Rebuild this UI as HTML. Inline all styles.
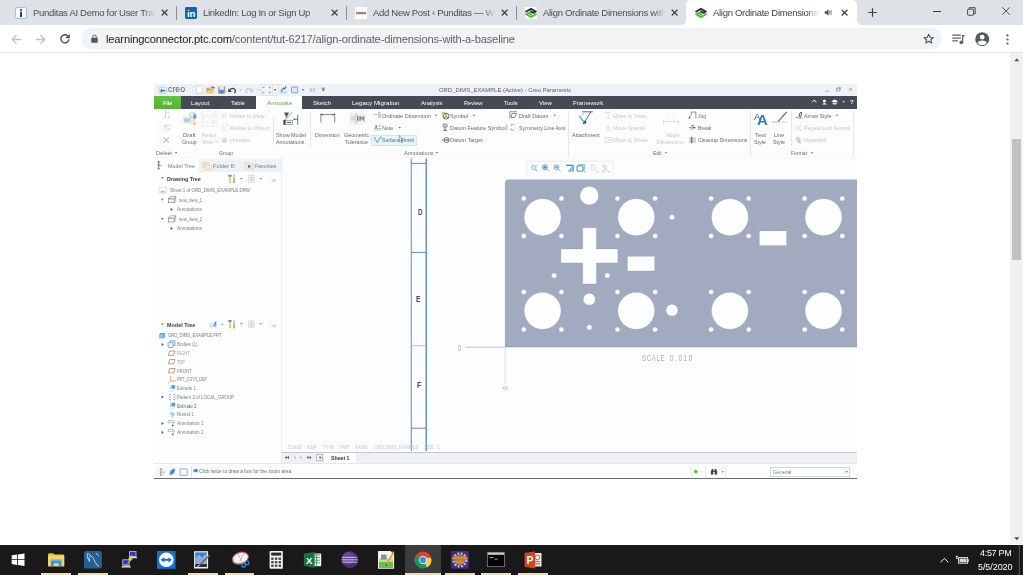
<!DOCTYPE html>
<html lang="en">
<head>
<meta charset="utf-8">
<title>Align Ordinate Dimensions with a Baseline</title>
<style>
*{box-sizing:border-box;margin:0;padding:0}
html,body{width:1023px;height:575px;overflow:hidden;background:#fff}
body{position:relative;font-family:"Liberation Sans",sans-serif;color:#000}
.abs{position:absolute}
.t{position:absolute;white-space:nowrap;line-height:1}
.ttl,#url,#clk1,#clk2{will-change:transform}
/* ---------- chrome frame ---------- */
#tabstrip{position:absolute;left:0;top:0;width:1023px;height:25.3px;background:#dee1e6}
#toolbar{position:absolute;left:0;top:25.3px;width:1023px;height:27.6px;background:#fff;border-bottom:1px solid #e1e3e7}
.tab{position:absolute;top:0;height:25.3px;width:170px}
.tab .fav{position:absolute;left:8.6px;top:7px;width:12px;height:12px}
.tab .ttl{position:absolute;left:26.2px;top:7.4px;font-size:9.5px;line-height:11px;color:#4a4d51;white-space:nowrap;overflow:hidden;width:122px;letter-spacing:-.3px;-webkit-mask-image:linear-gradient(90deg,#000 0,#000 calc(100% - 12px),transparent 100%);mask-image:linear-gradient(90deg,#000 0,#000 calc(100% - 12px),transparent 100%)}
.tab .x{position:absolute;left:154.9px;top:9.2px;width:7.2px;height:7.2px}
.sep{position:absolute;top:6px;width:1px;height:14px;background:#8b8e93}
#activetab{position:absolute;left:685.5px;top:0;width:171px;height:25.4px;background:#fff;border-radius:5px 5px 0 0}
#activetab:before,#activetab:after{content:"";position:absolute;bottom:0;width:5px;height:5px;background:radial-gradient(circle at 0 0,rgba(255,255,255,0) 4.6px,#fff 5.2px)}
#activetab:before{left:-5px}
#activetab:after{right:-5px;background:radial-gradient(circle at 100% 0,rgba(255,255,255,0) 4.6px,#fff 5.2px)}
#omni{position:absolute;left:80.9px;top:28.3px;width:861.3px;height:21.1px;border-radius:10.6px;background:#f1f3f4}
/* ---------- page scrollbar ---------- */
#sbar{position:absolute;left:1010.2px;top:53px;width:12.8px;height:490.7px;background:#f1f1f1}
#sthumb{position:absolute;left:1011.6px;top:139px;width:9.8px;height:121.3px;background:#c1c1c1}
#creo{position:absolute;left:0;top:0;width:1023px;height:575px;filter:blur(.3px)}
#ctext{position:absolute;left:0;top:0;width:1023px;height:575px;will-change:transform}
/* ---------- taskbar ---------- */
#taskbar{position:absolute;left:0;top:545px;width:1023px;height:30px;background:#191919}
.run{position:absolute;top:573px;height:2px;background:#f2dc9c}
</style>
</head>
<body>
<!-- CHROME TAB STRIP -->
<div id="tabstrip"></div>
<div id="activetab"></div>
<div class="tab" style="left:6.4px"><svg class="fav" viewBox="0 0 12 12"><rect x=".5" y=".5" width="11" height="11" rx="1.8" fill="#fdfdfe" stroke="#8fb2dc" stroke-width=".8"/><circle cx="6" cy="3.1" r="1.25" fill="#e23b2e"/><rect x="5" y="4.8" width="2" height="5.2" rx=".5" fill="#1f3f7a"/></svg><div class="ttl">Punditas AI Demo for User Trai</div><svg class="x" viewBox="0 0 10 10"><path d="M1 1 L9 9 M9 1 L1 9" stroke="#3c4043" stroke-width="1.7" fill="none"/></svg></div>
<div class="sep" style="left:176.1px"></div>
<div class="tab" style="left:176.5px"><svg class="fav" viewBox="0 0 12 12"><rect width="12" height="12" rx="1.4" fill="#0b67b2"/><text x="6.100" y="9.700" text-anchor="middle" font-family="Liberation Sans, sans-serif" font-weight="700" font-size="9.600" letter-spacing="-.2" fill="#fff">in</text></svg><div class="ttl">LinkedIn: Log In or Sign Up</div><svg class="x" viewBox="0 0 10 10"><path d="M1 1 L9 9 M9 1 L1 9" stroke="#3c4043" stroke-width="1.7" fill="none"/></svg></div>
<div class="sep" style="left:346.1px"></div>
<div class="tab" style="left:346.5px"><svg class="fav" viewBox="0 0 12 12"><rect width="12" height="12" fill="#fdfdfe"/><rect x="1" y="5" width="10.200" height="2.200" rx=".9" fill="#55525e" opacity=".8"/><rect x="5" y="5.200" width="1.600" height="1.600" fill="#d98b3a"/><rect x="2.200" y="5.600" width="1.400" height="1" fill="#d9d9e0"/><rect x="8" y="5.600" width="1.600" height="1" fill="#d9d9e0"/></svg><div class="ttl">Add New Post ‹ Punditas — Wo</div><svg class="x" viewBox="0 0 10 10"><path d="M1 1 L9 9 M9 1 L1 9" stroke="#3c4043" stroke-width="1.7" fill="none"/></svg></div>
<div class="sep" style="left:516.2px"></div>
<div class="tab" style="left:516.6px"><svg class="fav" viewBox="0 0 12 12"><rect width="12" height="12" fill="#fdfdfe"/><path d="M1.200 4.500 6 1.900 10.800 4.500 8.600 5.900 6 4.600" stroke="#2f3133" stroke-width="1.900" fill="none" stroke-linejoin="round" stroke-linecap="round"/><path d="M10.800 7.300 6 10.100 1.200 7.300 3.600 5.900 6.200 7.400" stroke="#55bd35" stroke-width="1.900" fill="none" stroke-linejoin="round" stroke-linecap="round"/></svg><div class="ttl">Align Ordinate Dimensions with</div><svg class="x" viewBox="0 0 10 10"><path d="M1 1 L9 9 M9 1 L1 9" stroke="#3c4043" stroke-width="1.7" fill="none"/></svg></div>
<div class="tab" style="left:686.6px"><svg class="fav" viewBox="0 0 12 12"><rect width="12" height="12" fill="#fdfdfe"/><path d="M1.200 4.500 6 1.900 10.800 4.500 8.600 5.900 6 4.600" stroke="#2f3133" stroke-width="1.900" fill="none" stroke-linejoin="round" stroke-linecap="round"/><path d="M10.800 7.300 6 10.100 1.200 7.300 3.600 5.900 6.200 7.400" stroke="#55bd35" stroke-width="1.900" fill="none" stroke-linejoin="round" stroke-linecap="round"/></svg><div class="ttl" style="width:106px;color:#3c4043">Align Ordinate Dimensions</div><svg class="abs" style="left:137px;top:8.2px;width:9px;height:9px" viewBox="0 0 12 12"><path d="M1 4.2h2.2L6 1.6v8.8L3.2 7.8H1z" fill="#4a4d51"/><path d="M7.6 3.6v4.8M9.4 2.6v6.8" stroke="#6a6d71" stroke-width="1.1" fill="none"/></svg><svg class="x" viewBox="0 0 10 10"><path d="M1 1 L9 9 M9 1 L1 9" stroke="#3c4043" stroke-width="1.7" fill="none"/></svg></div>
<svg class="abs" style="left:868px;top:8.4px;width:9px;height:9px" viewBox="0 0 10 10"><path d="M5 .3v9.4M.3 5h9.4" stroke="#3c4043" stroke-width="1.35" fill="none"/></svg>
<div class="abs" style="left:933px;top:10.6px;width:8px;height:1px;background:#3a3a3a"></div>
<svg class="abs" style="left:967px;top:6.6px;width:9px;height:9px" viewBox="0 0 9 9"><path d="M2.2 2V.7h6v6H7" stroke="#3a3a3a" stroke-width=".9" fill="none"/><rect x=".6" y="2.2" width="6" height="6" rx=".6" stroke="#3a3a3a" stroke-width=".9" fill="none"/></svg>
<svg class="abs" style="left:1001.6px;top:6.7px;width:8px;height:8px" viewBox="0 0 8 8"><path d="M.3 .3 7.7 7.7M7.7 .3 .3 7.7" stroke="#3a3a3a" stroke-width=".85" fill="none"/></svg>
<div id="toolbar"></div>
<div id="omni"></div>
<svg class="abs" style="left:11px;top:33.6px;width:11px;height:11px" viewBox="0 0 16 16"><path d="M15 8H2.2M8 1.8 1.8 8 8 14.2" stroke="#bdc1c6" stroke-width="1.9" fill="none"/></svg>
<svg class="abs" style="left:34.6px;top:33.6px;width:11px;height:11px" viewBox="0 0 16 16"><path d="M1 8h12.8M8 1.8 14.2 8 8 14.2" stroke="#bdc1c6" stroke-width="1.9" fill="none"/></svg>
<svg class="abs" style="left:58.6px;top:33px;width:12px;height:12px" viewBox="0 0 16 16"><path d="M13.2 8.6A5.4 5.4 0 1 1 11.7 4" stroke="#4d5156" stroke-width="1.9" fill="none"/><path d="M14.3 1v6h-6z" fill="#4d5156"/></svg>
<svg class="abs" style="left:90.9px;top:33.6px;width:7px;height:9.3px" viewBox="0 0 8 10"><rect x=".3" y="4" width="7.4" height="5.8" rx=".8" fill="#54575b"/><path d="M2 4.4V2.9a2 2 0 0 1 4 0v1.5" stroke="#54575b" stroke-width="1.1" fill="none"/></svg>
<div class="t" id="url" style="left:105.9px;top:33.4px;font-size:11.2px;line-height:13px;color:#5f6368;letter-spacing:-.19px"><span style="color:#202124">learningconnector.ptc.com</span>/content/tut-6217/align-ordinate-dimensions-with-a-baseline</div>
<svg class="abs" style="left:923px;top:33px;width:11.4px;height:11.4px" viewBox="0 0 24 24"><path d="M12 2.6l2.9 6.3 6.8.7-5.1 4.6 1.5 6.8L12 17.5 5.9 21l1.5-6.8L2.3 9.6l6.8-.7z" stroke="#4d5156" stroke-width="2.2" fill="none" stroke-linejoin="round"/></svg>
<svg class="abs" style="left:952px;top:34.1px;width:13px;height:11px" viewBox="0 0 13 11"><path d="M.3 1.2h8.6M.3 4h8.6M.3 6.8h5.6" stroke="#5f6368" stroke-width="1.25" fill="none"/><path d="M10.6 1v6.6" stroke="#5f6368" stroke-width="1.25"/><path d="M10 1h2.7v1.5H10z" fill="#5f6368"/><circle cx="9.3" cy="8.3" r="1.9" fill="#5f6368"/></svg>
<svg class="abs" style="left:975.2px;top:31.6px;width:14.4px;height:14.4px" viewBox="0 0 24 24"><circle cx="12" cy="12" r="11.6" fill="#55595e"/><circle cx="12" cy="8.6" r="3.9" fill="#fff"/><path d="M4.2 18.2c1.2-2.7 4.3-4 7.800-4s6.600 1.300 7.800 4a10 10 0 0 1-15.600 0z" fill="#fff"/></svg>
<svg class="abs" style="left:1005.6px;top:33.6px;width:3px;height:11px" viewBox="0 0 3 11"><circle cx="1.5" cy="1.4" r="1.1" fill="#55595e"/><circle cx="1.5" cy="5.5" r="1.1" fill="#55595e"/><circle cx="1.5" cy="9.6" r="1.1" fill="#55595e"/></svg>
<div id="sbar"></div><div id="sthumb"></div>
<svg class="abs" style="left:1013.8px;top:57.9px;width:5.6px;height:3.7px" viewBox="0 0 6 4"><path d="M3 .4 5.8 3.6H.2z" fill="#505050"/></svg>
<svg class="abs" style="left:1013.8px;top:536.6px;width:5.6px;height:3.7px" viewBox="0 0 6 4"><path d="M3 3.6 5.8 .4H.2z" fill="#505050"/></svg>
<div id="creo">
<div class="abs" style="left:153.5px;top:84.2px;width:703.1px;height:394.7px;background:#fcfdfe;"></div>
<div class="abs" style="left:153.5px;top:84.2px;width:703.1px;height:12.8px;background:#eef1f5;"></div>
<div class="abs" style="left:153.5px;top:108.6px;width:703.1px;height:49.0px;background:#fdfdfe;"></div>
<div class="abs" style="left:153.5px;top:96.2px;width:703.1px;height:12.8px;background:#444b55;"></div>
<div class="abs" style="left:153.5px;top:96.2px;width:27.6px;height:12.8px;background:linear-gradient(#61c342,#56b238);"></div>
<div class="abs" style="left:255.8px;top:96.2px;width:46.5px;height:13.2px;background:#fdfefe;"></div>
<div class="abs" style="left:272.8px;top:117.5px;width:0.7px;height:27.0px;background:#e4e7eb;"></div>
<div class="abs" style="left:310.1px;top:112.0px;width:0.7px;height:33.5px;background:#e4e7eb;"></div>
<div class="abs" style="left:568.1px;top:110.5px;width:0.7px;height:47.0px;background:#e4e7eb;"></div>
<div class="abs" style="left:749.9px;top:110.5px;width:0.7px;height:47.0px;background:#e4e7eb;"></div>
<div class="abs" style="left:791.0px;top:111.0px;width:0.7px;height:35.0px;background:#e4e7eb;"></div>
<div class="abs" style="left:853.4px;top:110.5px;width:0.7px;height:47.0px;background:#e4e7eb;"></div>
<div class="abs" style="left:153.5px;top:157.4px;width:703.1px;height:0.7px;background:#f6f8fa;"></div>
<div class="abs" style="left:371.2px;top:135.0px;width:45.8px;height:10.7px;background:#e2f7fe;border:.6px solid #c4ebf9"></div>
<div class="abs" style="left:153.5px;top:158.1px;width:127.5px;height:305.2px;background:#fdfefe;"></div>
<div class="abs" style="left:281.0px;top:158.1px;width:0.8px;height:305.2px;background:#eaedf5;"></div>
<div class="abs" style="left:199.1px;top:159.0px;width:82.1px;height:13.0px;background:#eef2f6;"></div>
<div class="abs" style="left:281.8px;top:158.1px;width:574.8px;height:293.9px;background:#fcfdfe;"></div>
<div class="abs" style="left:281.7px;top:452.0px;width:574.9px;height:11.3px;background:#eef0f3;"></div>
<div class="abs" style="left:281.7px;top:451.9px;width:574.9px;height:0.7px;background:#c3c7cc;"></div>
<div class="abs" style="left:324.4px;top:452.8px;width:31.8px;height:10.5px;background:#fdfefe;"></div>
<div class="abs" style="left:316.2px;top:454.2px;width:6.8px;height:7.0px;background:#f6f8fa;border:.6px solid #b9bec5"></div>
<div class="abs" style="left:153.5px;top:463.3px;width:703.1px;height:0.7px;background:#e6e8ef;"></div>
<div class="abs" style="left:153.5px;top:464.0px;width:703.1px;height:13.8px;background:#fcfdfe;"></div>
<div class="abs" style="left:153.5px;top:477.8px;width:703.1px;height:1.1px;background:#6a6e74;"></div>
<div class="abs" style="left:770.2px;top:466.7px;width:79.7px;height:10.3px;background:#fefefe;border:.6px solid #d3d7dc"></div><svg class="abs" style="left:282.4px;top:158.1px;width:574.2px;height:293.9px" viewBox="282.4 158.1 574.2 293.9">
<g stroke="#3c6eb4" stroke-width=".8" fill="none">
<path d="M411.7 158.6V451M411.7 163.5H426.3M411.7 252.5H426.3M411.7 428.3H426.3"/>
<path d="M426.6 158.6V451" stroke-width="1.150"/>
<path d="M411.7 345.8H426.3" stroke="#9ab6d9"/>
</g>
<path d="M509.3 179.5H860V347H505.3V183.5Q505.3 179.5 509.3 179.5Z" fill="#a1aabf"/>
<path d="M505.3 347H860" stroke="#7a8194" stroke-width=".5"/>
<g fill="#fdfeff" stroke="#8a92a6" stroke-width=".3">
<circle cx="543.0" cy="217.3" r="18.5"/>
<circle cx="524.2" cy="198.5" r="2.5"/>
<circle cx="524.2" cy="236.1" r="2.5"/>
<circle cx="561.8" cy="198.5" r="2.5"/>
<circle cx="561.8" cy="236.1" r="2.5"/>
<circle cx="636.7" cy="217.3" r="18.5"/>
<circle cx="617.9" cy="198.5" r="2.5"/>
<circle cx="617.9" cy="236.1" r="2.5"/>
<circle cx="655.5" cy="198.5" r="2.5"/>
<circle cx="655.5" cy="236.1" r="2.5"/>
<circle cx="730.3" cy="217.3" r="18.5"/>
<circle cx="711.5" cy="198.5" r="2.5"/>
<circle cx="711.5" cy="236.1" r="2.5"/>
<circle cx="749.1" cy="198.5" r="2.5"/>
<circle cx="749.1" cy="236.1" r="2.5"/>
<circle cx="823.9" cy="217.3" r="18.5"/>
<circle cx="805.1" cy="198.5" r="2.5"/>
<circle cx="805.1" cy="236.1" r="2.5"/>
<circle cx="842.7" cy="198.5" r="2.5"/>
<circle cx="842.7" cy="236.1" r="2.5"/>
<circle cx="543.0" cy="310.9" r="18.5"/>
<circle cx="524.2" cy="292.1" r="2.5"/>
<circle cx="524.2" cy="329.7" r="2.5"/>
<circle cx="561.8" cy="292.1" r="2.5"/>
<circle cx="561.8" cy="329.7" r="2.5"/>
<circle cx="636.7" cy="310.9" r="18.5"/>
<circle cx="617.9" cy="292.1" r="2.5"/>
<circle cx="617.9" cy="329.7" r="2.5"/>
<circle cx="655.5" cy="292.1" r="2.5"/>
<circle cx="655.5" cy="329.7" r="2.5"/>
<circle cx="730.3" cy="310.9" r="18.5"/>
<circle cx="711.5" cy="292.1" r="2.5"/>
<circle cx="711.5" cy="329.7" r="2.5"/>
<circle cx="749.1" cy="292.1" r="2.5"/>
<circle cx="749.1" cy="329.7" r="2.5"/>
<circle cx="823.9" cy="310.9" r="18.5"/>
<circle cx="805.1" cy="292.1" r="2.5"/>
<circle cx="805.1" cy="329.7" r="2.5"/>
<circle cx="842.7" cy="292.1" r="2.5"/>
<circle cx="842.7" cy="329.7" r="2.5"/>
<circle cx="589.7" cy="195.8" r="9.4"/>
<circle cx="672.4" cy="217.3" r="2.6"/>
<path d="M583.1 227.8H596.8V249H618.3V263H596.8V284.1H583.1V263H561.3V249H583.1Z"/>
<rect x="627.8" y="256.3" width="27.4" height="14.8"/>
<rect x="759.7" y="231" width="27.4" height="14.8"/>
<circle cx="554.5" cy="275.7" r="2.6"/>
<circle cx="607.7" cy="275.7" r="2.6"/>
<circle cx="589.7" cy="299.3" r="6"/>
<circle cx="672.4" cy="310.3" r="6"/>
<circle cx="589.7" cy="327.4" r="2.6"/>
</g>
<path d="M465.5 347.3H505" stroke="#b49cc8" stroke-width=".7" fill="none"/>
<path d="M505.6 347V383.8" stroke="#c9c3d6" stroke-width=".6" fill="none"/>
<ellipse cx="505.5" cy="388.3" rx="2.4" ry="1.3" stroke="#9a9ea6" stroke-width=".6" fill="none"/>
</svg><svg class="abs" style="left:153.5px;top:84.2px;width:703.1px;height:395.5px" viewBox="153.5 84.2 703.1 395.5">
<rect x="158.7" y="87.3" width="7.4" height="6.4" rx=".8" fill="#dbeaf8" stroke="#9cc3e8" stroke-width=".5"/>
<path d="M164.6 90.3H161.6V88.9L159.6 90.9L161.6 92.9V91.5H164.6Z" fill="#2f6fb5"/>
<path d="M192.3 86V94.5" stroke="#dde1e6" stroke-width="0.6" fill="none" />
<path d="M196 86.2H200.1L201.8 87.9V93.6H196Z" fill="#fefefe" stroke="#b9bec6" stroke-width=".5"/>
<path d="M205.9 88H209L209.8 88.9H212.6V93.5H205.9Z" fill="#e9a13b"/>
<path d="M205.9 93.5L207.3 90.2H213.8L212.6 93.5Z" fill="#f7c978"/>
<path d="M210 87.6Q211.6 86 213.2 87.2L213.6 86.4L214 88.6L211.8 88.4L212.6 87.8Q211.5 87.1 210.6 88Z" fill="#3b3f45"/>
<rect x="217.7" y="86.6" width="7" height="7.2" rx=".6" fill="#8e98a8"/>
<rect x="219" y="86.6" width="4.4" height="3.2" fill="#e9edf2"/>
<rect x="219.4" y="90.9" width="3.6" height="2.9" fill="#4f86c6"/>
<path d="M229.2 90.2Q231.6 87.6 234 89.3Q235.8 91 234 93.3" stroke="#33363b" stroke-width="1.15" fill="none"/>
<path d="M227.8 88.4V92.1H231.4Z" fill="#33363b"/>
<path d="M238.80 89.50H241.20L240.00 90.90Z" fill="#a9aeb5"/>
<path d="M250.8 90.2Q248.4 87.6 246.2 89.3Q244.6 91 246.4 93.3" stroke="#c6cad0" stroke-width="1.1" fill="none"/>
<path d="M252.3 88.4V92.1H248.7Z" fill="#c6cad0"/>
<path d="M256.40 89.50H258.80L257.60 90.90Z" fill="#c0c4ca"/>
<rect x="260.7" y="84.6" width="11" height="10.7" fill="#f4f6f9" stroke="#cdd1d7" stroke-width=".5"/>
<rect x="271.7" y="84.6" width="6.1" height="10.7" fill="#f4f6f9" stroke="#cdd1d7" stroke-width=".5"/>
<path d="M262.6 88.4V87.2H264M268.3 87.2H269.7V88.4M269.7 91.8V93H268.3M264 93H262.6V91.8" stroke="#5a5e64" stroke-width="0.6" fill="none" />
<path d="M273.40 89.45H276.00L274.70 90.95Z" fill="#3b3f45"/>
<path d="M280.4 91.5L283 88.2L284.2 89.2L285.8 86.6" stroke="#2f7fd0" stroke-width="1.1" fill="none"/>
<rect x="280" y="91.2" width="2.6" height="2.3" fill="#9fc4ea"/><rect x="283.2" y="91.6" width="2.6" height="2" fill="#c9ced6"/>
<rect x="291" y="87.4" width="6.2" height="5.6" rx=".6" fill="#d9e9f8" stroke="#5b9ad8" stroke-width=".8"/>
<rect x="292.6" y="86.6" width="5" height="1.2" fill="#b9c0ca"/>
<path d="M301.30 89.45H303.90L302.60 90.95Z" fill="#4a4e54"/>
<path d="M309.4 88.2L311.6 92.4M311.6 88.2L309.4 92.4M312.4 88.2L314.6 92.4M314.6 88.2L312.4 92.4" stroke="#a5aab2" stroke-width="0.6" fill="none" />
<path d="M317.4 85.5V95" stroke="#d9dde2" stroke-width="0.6" fill="none" />
<path d="M321.2 88.4H324.4" stroke="#3b3f45" stroke-width="0.7" fill="none" />
<path d="M321.30 89.75H324.30L322.80 91.45Z" fill="#3b3f45"/>
<path d="M825 91.4H828.4" stroke="#7d8188" stroke-width="0.6" fill="none" />
<rect x="836" y="88.6" width="3" height="2.6" fill="none" stroke="#7d8188" stroke-width=".55"/>
<path d="M837 88.6V87.6H840V90.2H839" stroke="#7d8188" stroke-width="0.55" fill="none" />
<path d="M848.6 88.1L851.6 91.3M851.6 88.1L848.6 91.3" stroke="#7d8188" stroke-width="0.6" fill="none" />
<path d="M811.8 102.4L813.8 100.2L815.8 102.4" stroke="#ffffff" stroke-width="1" fill="none" />
<circle cx="823.9" cy="101.2" r="1.5" fill="#fff"/><path d="M821.4 104.6Q823.9 101.6 826.4 104.6Z" fill="#fff"/>
<path d="M830.8 101.4L834.2 99.8L837.6 101.4L834.2 103Z" fill="#fff"/><path d="M832.2 102.8V104.2Q834.2 105.2 836.2 104.2V102.8L834.2 103.8Z" fill="#fff"/>
<path d="M841.90 101.40H844.50L843.20 103.00Z" fill="#ffffff"/>
<path d="M165 111.6V118.6M165 113H169.6M163 118.6L165 115.4" stroke="#c0c4ca" stroke-width="0.6" fill="none" />
<path d="M167.2 116.2L169.4 118.2M169.4 116.2L167.2 118.2" stroke="#b4b8be" stroke-width="0.6" fill="none" />
<path d="M163 125.6H170M165.4 124.4V131.6M163 129L165.4 126.4" stroke="#c0c4ca" stroke-width="0.6" fill="none" />
<path d="M167.4 128.6L169.4 130.8M169.4 128.6L167.4 130.8" stroke="#b4b8be" stroke-width="0.6" fill="none" />
<path d="M162.9 137.6L168.7 143.2M168.7 137.6L162.9 143.2" stroke="#8b8f96" stroke-width="0.75" fill="none" />
<path d="M174.20 152.15H176.80L175.50 153.65Z" fill="#6b6f75"/>
<circle cx="192.3" cy="116.2" r="3.9" fill="#cfe0f4"/><circle cx="193.2" cy="116.6" r="2.6" fill="#6d9fd8"/><circle cx="191.5" cy="115" r="1.6" fill="#f4f9fe"/>
<rect x="183" y="117.2" width="8.2" height="5.6" rx=".5" fill="#a7d4f2"/><rect x="183" y="117.2" width="8.2" height="1.6" fill="#d6ecfa"/>
<path d="M191.6 115.4L195.8 123.8Q192.2 126 188.2 123.8Z" fill="#f6dcae"/><path d="M191.6 115.4L193.6 124.8Q192 125.3 190.4 124.9Z" fill="#fbeed3"/>
<circle cx="193.9" cy="124" r=".6" fill="#e0524a"/>
<rect x="201.2" y="111.2" width="15.4" height="15.4" fill="none" stroke="#d3d6db" stroke-width=".7" stroke-dasharray="1.2 1"/>
<rect x="203" y="115.4" width="6.6" height="7" fill="none" stroke="#e1e4e8" stroke-width=".7"/>
<circle cx="213.1" cy="115.4" r="1.5" fill="none" stroke="#cfd2d7" stroke-width=".6"/><circle cx="213.1" cy="122" r="1.5" fill="none" stroke="#cfd2d7" stroke-width=".6"/>
<path d="M214.30 141.25H216.90L215.60 142.75Z" fill="#c9cdd2"/>
<path d="M221.2 114H225.4M221.2 115.8H224.4M221.6 117.6H223.6M225.6 113V116.4M224 116.8L226.6 118.6" stroke="#d0d3d8" stroke-width="0.6" fill="none" />
<path d="M221.6 125.4V130.4H225.6M223.2 126.4L225.8 129M225.4 124.8H227V126.4" stroke="#d0d3d8" stroke-width="0.6" fill="none" />
<circle cx="224" cy="140.4" r="2.1" fill="none" stroke="#a9adb4" stroke-width=".6"/>
<path d="M224 138.4V142.4M222.4 141.6L224 140L225.6 141.6" stroke="#b4b8be" stroke-width="0.5" fill="none" />
<path d="M283.6 112.6H288.6L286.4 116.8V119.4L285.4 118.8V116.8Z" fill="#4a4e55"/>
<path d="M291.8 112.2L283.8 120.6" stroke="#8fd6f3" stroke-width="1.3" fill="none" />
<path d="M297.2 115V125M297.2 119.4H293.4" stroke="#3d4147" stroke-width="0.7" fill="none" />
<path d="M293.2 118.4V120.4L294.8 119.4Z" fill="#3d4147"/>
<rect x="283.2" y="120.4" width="8.6" height="4.4" fill="#fff" stroke="#5a5e64" stroke-width=".55"/>
<rect x="283.2" y="120.4" width="1.9" height="4.4" fill="#3d4147"/>
<path d="M286.4 122.6H290.6" stroke="#4a4e55" stroke-width="1" fill="none" />
<path d="M320.4 113.4V122.6M334.2 113.4V122.6M320.4 114.8H334.2" stroke="#60646b" stroke-width="0.8" fill="none" />
<path d="M320.4 114.8L322.4 113.9V115.7ZM334.2 114.8L332.2 113.9V115.7Z" fill="#4a4e55"/>
<path d="M349.6 113.6H364M349.6 124H364" stroke="#d5d8dc" stroke-width="0.6" fill="none" />
<rect x="349.6" y="115.4" width="14.4" height="6.6" fill="none" stroke="#c9ccd1" stroke-width=".5"/>
<path d="M355.4 113.6V124" stroke="#9a9ea5" stroke-width="0.6" fill="none" />
<path d="M350.4 117.4H353.4M350.4 120H353.4M353.4 116.8Q354.8 118.7 353.4 120.6" stroke="#8b8f96" stroke-width="0.6" fill="none" />
<path d="M357 116.4V121M358.6 116.4V121" stroke="#5a5e64" stroke-width="0.9" fill="none" />
<path d="M360.2 121V116.6L361.7 119.6L363.2 116.6V121" stroke="#5a5e64" stroke-width="0.8" fill="none" />
<path d="M373.2 114.8H377.4M378.4 112V117.4M379.6 112.4V117.4M377.6 117.4H380.6" stroke="#8b8f96" stroke-width="0.6" fill="none" />
<path d="M434.30 115.05H436.90L435.60 116.55Z" fill="#6b6f75"/>
<path d="M374.6 127.6L375.6 125L376.6 127.6Z" fill="#4a4e55"/>
<path d="M377.6 126H380.6M373.4 128.6H380.6" stroke="#7b7f86" stroke-width="0.6" fill="none" />
<path d="M373.4 130.2H380.6" stroke="#b4b8be" stroke-width="0.9" fill="none" />
<path d="M397.90 127.25H400.50L399.20 128.75Z" fill="#6b6f75"/>
<path d="M375.2 140L376.8 142.8L379.8 137.4H381.4" stroke="#3f6b96" stroke-width="0.7" fill="none" />
<path d="M373.2 138H375.6M373.4 139.4H375.2" stroke="#5a6f8a" stroke-width="0.6" fill="none" />
<path d="M441.4 112.2H444.6V113H442.2V115.4H441.4Z" fill="#e9a13b"/>
<circle cx="445.6" cy="116.3" r="2.9" fill="none" stroke="#3d4147" stroke-width=".8"/>
<path d="M445.6 113.6V116.4L443.4 118.2M445.6 116.4L447.8 118.2" stroke="#3d4147" stroke-width="0.7" fill="none" />
<path d="M472.10 115.05H474.70L473.40 116.55Z" fill="#6b6f75"/>
<rect x="442.6" y="124.2" width="4" height="3" fill="#c9ccd1" stroke="#5a5e64" stroke-width=".5"/>
<path d="M444.6 127.2V130.2M442.8 130.6H446.4" stroke="#3d4147" stroke-width="0.8" fill="none" />
<circle cx="446" cy="140.3" r="2.5" fill="none" stroke="#3d4147" stroke-width=".7"/>
<path d="M441 140.3H448.4" stroke="#3d4147" stroke-width="0.6" fill="none" />
<circle cx="446.3" cy="140.3" r=".9" fill="#6b6f75"/>
<path d="M435.10 152.15H437.70L436.40 153.65Z" fill="#6b6f75"/>
<path d="M509.4 118.8V111.9H516.3" stroke="#4a4e55" stroke-width="0.6" fill="none" />
<path d="M511.6 113.6H515.8L514.4 117.6H510.4Z" fill="none" stroke="#a0622a" stroke-width=".8"/>
<path d="M552.90 115.05H555.50L554.20 116.55Z" fill="#6b6f75"/>
<path d="M510.6 124.6H513.4M510.6 124.6V126.6M510.6 128.4V130.4M510.6 130.4H513.4" stroke="#7b7f86" stroke-width="0.6" fill="none" />
<path d="M514.4 124V131" stroke="#b4b8be" stroke-width="0.5" fill="none" stroke-dasharray="1.4 .8"/>
<path d="M506.5 124.4V130.6" stroke="#8b8f96" stroke-width="0.6" fill="none" />
<path d="M581.6 112H592.4M590.4 112L583.6 123" stroke="#3d4147" stroke-width="0.8" fill="none" />
<path d="M582.4 124.6L583.2 120.6L586.4 122.4Z" fill="#24282e"/>
<path d="M579 116L584.8 124.6" stroke="#35a9ee" stroke-width="1.2" fill="none" />
<path d="M581.4 113.6L583.6 115.4M583.6 113.6L581.4 115.4" stroke="#8b8f96" stroke-width="0.5" fill="none" />
<path d="M605 112.6H610.4M607.7 112.6V118.6M606 118.6H609.4M604.6 113.4L605.6 112" stroke="#d0d3d8" stroke-width="0.7" fill="none" />
<path d="M604.6 130.4H611M607.6 125V130.4M605.6 128.4Q607.6 126.4 609.6 128.4" stroke="#d0d3d8" stroke-width="0.6" fill="none" />
<rect x="604.6" y="137.8" width="6.4" height="5" fill="none" stroke="#d0d3d8" stroke-width=".6"/>
<path d="M606 140.3H609.4M608.4 139.2L609.6 140.3L608.4 141.4" stroke="#c3c7cc" stroke-width="0.6" fill="none" />
<path d="M667.6 112.6V124.6M673.4 112.6V124.6M667.6 113.6H673.4" stroke="#dfe2e6" stroke-width="0.6" fill="none" stroke-dasharray="1.2 .8"/>
<path d="M663 120.6V124.6M678 120.6V124.6M663 121.6H678" stroke="#d0d3d8" stroke-width="0.7" fill="none" />
<path d="M688.6 118.6L690.8 114.6L690.8 112.2H695.4V118.6" stroke="#5a5e64" stroke-width="0.65" fill="none" />
<path d="M688.2 119L688.6 116.8L690 118Z" fill="#3d4147"/>
<path d="M688.4 127.9H691M693 127.9H695.6M691.4 125.4V130.4" stroke="#5a5e64" stroke-width="0.65" fill="none" />
<path d="M691.8 127.9L693.8 126.8V129Z" fill="#3d4147"/><path d="M691.2 125H693.4V126H691.2Z" fill="#6b6f75"/>
<path d="M688.4 138.4H695.4M688.4 140.3H695.4M688.4 142.2H695.4" stroke="#7b7f86" stroke-width="0.6" fill="none" />
<path d="M691.2 137V143.6" stroke="#3d4147" stroke-width="0.9" fill="none" />
<path d="M664.10 152.45H666.70L665.40 153.95Z" fill="#6b6f75"/>
<path d="M771 122.2H778.4" stroke="#6fd0f3" stroke-width="0.9" fill="none" />
<path d="M778.4 122.2H786.4" stroke="#b4b8be" stroke-width="0.6" fill="none" />
<path d="M786.2 112.2L778.6 120.6" stroke="#6b6f75" stroke-width="1.2" fill="none" />
<path d="M785.4 111.8L780.2 117.6" stroke="#d9b9a0" stroke-width="0.5" fill="none" />
<path d="M777.4 122L778 120L779.4 121.2Z" fill="#3d4147"/>
<path d="M794.8 117.8H797.4M797.6 118.4H801.8" stroke="#5a5e64" stroke-width="0.6" fill="none" />
<path d="M798.4 117.6L799.2 113.8L800.6 112.2L801.2 113.4L800 117.6" stroke="#3d4147" stroke-width="0.9" fill="none" />
<path d="M835.10 115.05H837.70L836.40 116.55Z" fill="#6b6f75"/>
<path d="M795 125L801 131M795.4 130.8L800.8 125M798.6 130.4H801.6" stroke="#d0d3d8" stroke-width="0.8" fill="none" />
<circle cx="797.6" cy="139.4" r="2.5" fill="#d6d9dd"/><path d="M797.4 139.8L801.4 141.4L799.6 142L800.6 143.6L799.8 144L798.8 142.4L797.6 143.6Z" fill="#c3c7cc"/>
<path d="M810.10 152.45H812.70L811.40 153.95Z" fill="#6b6f75"/>
</svg><svg class="abs" style="left:153.5px;top:84.2px;width:703.1px;height:395.5px" viewBox="153.5 84.2 703.1 395.5">
<rect x="157.5" y="161.6" width="1.5" height="1.5" fill="none" stroke="#5a5e64" stroke-width=".45"/>
<rect x="157.5" y="164.9" width="1.5" height="1.5" fill="none" stroke="#5a5e64" stroke-width=".45"/>
<rect x="157.5" y="168.2" width="1.5" height="1.5" fill="none" stroke="#5a5e64" stroke-width=".45"/>
<path d="M158.2 163.1V164.9M158.2 166.4V168.2M159.4 165.7H161" stroke="#5a5e64" stroke-width="0.5" fill="none" />
<path d="M202.2 162.4H205L205.8 163.2H208.6V167.6H202.2Z" fill="#f6e3bd" stroke="#e2b772" stroke-width=".35"/>
<path d="M204.8 164.8H207.6L208.4 165.6H211.2V169.8H204.8Z" fill="#faecd0" stroke="#e2b772" stroke-width=".35"/>
<path d="M244.8 163H248L248.8 163.9H253.2V169.4H244.8Z" fill="#f9ecd2" stroke="#e2b772" stroke-width=".4"/>
<path d="M247.6 165L250.8 166.6L247.6 168.2Z" fill="#2f6fb5"/>
<path d="M160.20 177.50H163.40L161.80 179.50Z" fill="#7d8188"/>
<rect x="227.6" y="175.0" width="3.6" height="1.9" rx=".4" fill="#8b8f96"/>
<rect x="228.7" y="176.7" width="1.5" height="6.6" fill="#e0b87a"/>
<rect x="233" y="174.7" width="1" height="4" fill="#9a9ea5"/>
<rect x="232.6" y="178.5" width="1.8" height="4.8" rx=".4" fill="#e3a24a"/>
<path d="M239.70 178.20H242.10L240.90 179.60Z" fill="#6b6f75"/>
<rect x="248.2" y="175.9" width="5.6" height="6.6" fill="#f1f3f6" stroke="#c3c7cc" stroke-width=".45"/>
<path d="M249.4 177.7H252.6M249.4 179.2H252.6M249.4 180.7H252.6" stroke="#a5aab2" stroke-width="0.5" fill="none" />
<path d="M250.4 175.7L252 174.5L253.2 175.5" stroke="#b4b8be" stroke-width="0.5" fill="none" />
<path d="M259.00 178.20H261.40L260.20 179.60Z" fill="#6b6f75"/>
<path d="M269.6 174.9V181.9M269.6 177.5H271.4M269.6 180.9H271.4" stroke="#d9dce1" stroke-width="0.6" fill="none" stroke-dasharray=".9 .7"/>
<rect x="272" y="179.5" width="3.4" height="2.6" fill="#d3d6db"/>
<path d="M160.20 323.60H163.40L161.80 325.60Z" fill="#7d8188"/>
<rect x="227.6" y="320.3" width="3.6" height="1.9" rx=".4" fill="#8b8f96"/>
<rect x="228.7" y="322.0" width="1.5" height="6.6" fill="#e0b87a"/>
<rect x="233" y="320.0" width="1" height="4" fill="#9a9ea5"/>
<rect x="232.6" y="323.8" width="1.8" height="4.8" rx=".4" fill="#e3a24a"/>
<path d="M239.70 323.50H242.10L240.90 324.90Z" fill="#6b6f75"/>
<rect x="248.2" y="321.2" width="5.6" height="6.6" fill="#f1f3f6" stroke="#c3c7cc" stroke-width=".45"/>
<path d="M249.4 323.0H252.6M249.4 324.5H252.6M249.4 326.0H252.6" stroke="#a5aab2" stroke-width="0.5" fill="none" />
<path d="M250.4 321.0L252 319.8L253.2 320.8" stroke="#b4b8be" stroke-width="0.5" fill="none" />
<path d="M259.00 323.50H261.40L260.20 324.90Z" fill="#6b6f75"/>
<path d="M269.6 320.2V327.2M269.6 322.8H271.4M269.6 326.2H271.4" stroke="#d9dce1" stroke-width="0.6" fill="none" stroke-dasharray=".9 .7"/>
<rect x="272" y="324.8" width="3.4" height="2.6" fill="#d3d6db"/>
<path d="M208.8 323H215.2L216.6 321.6V326L215.2 327.6H208.8Z" fill="#cfe4f7"/>
<path d="M214.2 322.4L216 321.2L214.8 326.4L213.4 327.2Z" fill="#3f8ad6"/>
<path d="M220.60 323.90H223.00L221.80 325.30Z" fill="#6b6f75"/>
<rect x="158.5" y="187.6" width="7.2" height="5.8" fill="#fafcfe" stroke="#c3c9d2" stroke-width=".45"/>
<path d="M159.4 192.6L161.4 190.4L162.8 191.6L164 190.6L165 192.6Z" fill="#8fc0ea"/>
<path d="M160.20 198.90H163.40L161.80 200.90Z" fill="#7d8188"/>
<path d="M168 199.2L169.6 196.8H175.2L173.6 199.2Z" fill="#fdfdfe" stroke="#5a5e64" stroke-width=".5"/>
<rect x="168" y="199.2" width="5.6" height="3.8" fill="#fdfdfe" stroke="#5a5e64" stroke-width=".5"/>
<path d="M173.6 203.0L175.2 200.6V196.8" stroke="#5a5e64" stroke-width="0.5" fill="none" />
<path d="M170.10 208.00L172.50 209.60L170.10 211.20Z" fill="#5a5e64"/>
<path d="M160.20 218.10H163.40L161.80 220.10Z" fill="#7d8188"/>
<path d="M168 218.4L169.6 216.0H175.2L173.6 218.4Z" fill="#fdfdfe" stroke="#5a5e64" stroke-width=".5"/>
<rect x="168" y="218.4" width="5.6" height="3.8" fill="#fdfdfe" stroke="#5a5e64" stroke-width=".5"/>
<path d="M173.6 222.2L175.2 219.8V216.0" stroke="#5a5e64" stroke-width="0.5" fill="none" />
<path d="M170.10 227.00L172.50 228.60L170.10 230.20Z" fill="#5a5e64"/>
<path d="M158.8 334.4L160 333.2H164.4V337.2L163.2 338.4H158.8Z" fill="#4f9be0"/><path d="M158.8 334.4H163.2V338.4H158.8Z" fill="#8cc3f0"/>
<path d="M161.00 343.20L163.40 344.80L161.00 346.40Z" fill="#5a5e64"/>
<rect x="167.6" y="342.6" width="5" height="5" rx=".8" fill="#f2f8fd" stroke="#3f8ad6" stroke-width=".7"/>
<path d="M169.6 342.4V341H174.4V345.6H172.8" fill="none" stroke="#3f8ad6" stroke-width=".7"/>
<path d="M169.2 351.2H174.6L173.2 355.6H167.8Z" fill="none" stroke="#a86b3a" stroke-width=".65"/>
<path d="M169.2 359.7H174.6L173.2 364.1H167.8Z" fill="none" stroke="#a86b3a" stroke-width=".65"/>
<path d="M169.2 368.7H174.6L173.2 373.1H167.8Z" fill="none" stroke="#a86b3a" stroke-width=".65"/>
<path d="M170.2 376.2V381.2H175.2M170.2 381.2L167.6 383.4" stroke="#c08a4a" stroke-width="0.7" fill="none" />
<path d="M171 385.3H174.6V388.9H171Z" fill="#4f9be0"/>
<path d="M171 385.3L169.4 386.7V390.3L171 388.9Z" fill="#a9d4f5"/>
<path d="M168 391.7H172.4L173.4 389.9" stroke="#c3c9d2" stroke-width="0.5" fill="none" />
<path d="M161.00 395.60L163.40 397.20L161.00 398.80Z" fill="#5a5e64"/>
<rect x="168.85" y="394.05" width="1.1" height="1.1" fill="#8a5fc0"/>
<rect x="168.85" y="396.65" width="1.1" height="1.1" fill="#8a5fc0"/>
<rect x="168.85" y="399.25" width="1.1" height="1.1" fill="#8a5fc0"/>
<rect x="173.05" y="394.05" width="1.1" height="1.1" fill="#8a5fc0"/>
<rect x="173.05" y="396.65" width="1.1" height="1.1" fill="#8a5fc0"/>
<rect x="173.05" y="399.25" width="1.1" height="1.1" fill="#8a5fc0"/>
<path d="M175.3 394.2V400.2" stroke="#c9ccd1" stroke-width="0.5" fill="none" />
<path d="M171 403.0H174.6V406.6H171Z" fill="#4f9be0"/>
<path d="M171 403.0L169.4 404.4V408.0L171 406.6Z" fill="#a9d4f5"/>
<path d="M168 409.4H172.4L173.4 407.6" stroke="#c3c9d2" stroke-width="0.5" fill="none" />
<path d="M169 412.6Q173.6 411.6 174.4 414.4Q172.6 415.4 172.4 418L171.4 417.6Q171.2 414.2 169 412.6Z" fill="#8fc8f2"/>
<path d="M161.00 422.10L163.40 423.70L161.00 425.30Z" fill="#5a5e64"/>
<path d="M167.6 420.8H172.6V423.0H167.6ZM174.6 421.4L172 426.4" stroke="#8b8f96" stroke-width="0.55" fill="none" />
<path d="M171.4 427.0L171.8 424.8L173.2 425.8Z" fill="#3d4147"/>
<path d="M161.00 430.90L163.40 432.50L161.00 434.10Z" fill="#5a5e64"/>
<path d="M167.6 429.6H172.6V431.8H167.6ZM174.6 430.2L172 435.2" stroke="#8b8f96" stroke-width="0.55" fill="none" />
<path d="M171.4 435.8L171.8 433.6L173.2 434.6Z" fill="#3d4147"/>
<path d="M526.4 175.4V161.4H612.4V175.4" fill="#fdfefe" stroke="#dde1e6" stroke-width=".6"/>
<rect x="530.6" y="165" width="5.6" height="5.6" fill="#eef3f9" stroke="#c3c9d2" stroke-width=".5" stroke-dasharray="1 .6"/>
<circle cx="533.2" cy="167.6" r="1.9" fill="#e3eefa" stroke="#7fa6cf" stroke-width=".6"/>
<path d="M534.6 169.2L537 171.6" stroke="#8b8f96" stroke-width="0.8" fill="none" />
<circle cx="544.4" cy="167.4" r="2.5" fill="#d9e9f8" stroke="#3f7fc9" stroke-width=".7"/>
<path d="M543 167.4H545.8M544.4 166V168.8" stroke="#1f5fa8" stroke-width="0.8" fill="none" />
<path d="M546.3 169.4L548.6 171.6" stroke="#9a9ea5" stroke-width="0.9" fill="none" />
<circle cx="556" cy="167.4" r="2.5" fill="#d9e9f8" stroke="#5b93d3" stroke-width=".7"/>
<path d="M554.6 167.4H557.4" stroke="#1f5fa8" stroke-width="0.8" fill="none" />
<path d="M557.9 169.4L560.2 171.6" stroke="#9a9ea5" stroke-width="0.9" fill="none" />
<path d="M565.6 165H573.2V171.6H567.2L572 166.2H565.6Z" fill="#3f8ad6"/>
<path d="M567.6 171.4L572.6 165.8V171.4Z" fill="#8cc0ee"/>
<rect x="576.6" y="166" width="6" height="5.4" rx=".6" fill="#fdfefe" stroke="#2f6fb5" stroke-width=".9"/>
<path d="M576.8 166L578.2 164.6H584.2V169.8L582.8 171.2" fill="none" stroke="#6fa8e0" stroke-width=".8"/>
<path d="M583.60 171.70H585.20L584.40 172.70Z" fill="#5a5e64"/>
<circle cx="592.4" cy="167.4" r="2.8" fill="#f1f3f6" stroke="#d3d6db" stroke-width=".6"/>
<path d="M594.4 169.6L596.6 171.8" stroke="#d3d6db" stroke-width="0.9" fill="none" />
<path d="M596.20 171.70H597.80L597.00 172.70Z" fill="#9a9ea5"/>
<path d="M602 165.2L604 167M604 165.2L602 167M605.4 165.6V168M603 170.6L605 168.6L607 170.6M602 171.6H604" stroke="#e0a04a" stroke-width="0.7" fill="none" />
<path d="M607.80 171.70H609.40L608.60 172.70Z" fill="#5a5e64"/>
<path d="M286.30 456.10L284.30 457.60L286.30 459.10Z" fill="#4a4e55"/>
<path d="M288.50 456.10L286.50 457.60L288.50 459.10Z" fill="#4a4e55"/>
<path d="M295.20 456.10L293.20 457.60L295.20 459.10Z" fill="#b4b8be"/>
<path d="M299.40 456.10L301.40 457.60L299.40 459.10Z" fill="#b4b8be"/>
<path d="M306.90 456.10L308.90 457.60L306.90 459.10Z" fill="#4a4e55"/>
<path d="M309.10 456.10L311.10 457.60L309.10 459.10Z" fill="#4a4e55"/>
<path d="M318.2 457.7H321.2M319.7 456.2V459.2" stroke="#4a4e55" stroke-width="0.6" fill="none" />
<rect x="155.900" y="467.800" width="9.800" height="9.200" fill="#f3f4f7"/>
<path d="M160.4 468.8V476M160.4 470H162M160.4 474.6H162" stroke="#7b7f86" stroke-width="0.5" fill="none" />
<rect x="159.6" y="468.6" width="1.6" height="1.6" fill="#9a9ea5"/><rect x="159.6" y="471.6" width="1.6" height="1.6" fill="#9a9ea5"/><rect x="159.6" y="474.4" width="1.6" height="1.6" fill="#9a9ea5"/>
<path d="M162.4 472.4H164.4" stroke="#5a5e64" stroke-width="0.6" fill="none" />
<path d="M168.6 474.6L170.4 470.4L175 469.2L173.4 473.6Z" fill="#3f8ad6"/><path d="M168.6 474.6L170.2 476L173.4 473.6Z" fill="#8cc0ee"/><path d="M171.6 470L172.6 468.4L174.2 469.4Z" fill="#6a6e74"/>
<rect x="179.500" y="469" width="7.200" height="6.600" rx=".5" fill="#f4f8fd" stroke="#4f8fd6" stroke-width=".65"/>
<path d="M191 466.6V477" stroke="#c9ccd1" stroke-width="0.6" fill="none" />
<path d="M193 469.6H195.2V468.4L197.8 470.8L195.2 473.2V472H193Z" fill="#2f7fd0"/>
<path d="M690.8 466.4V477.2M705.2 466.4V477.2M725.3 466.4V477.2" stroke="#d3d6db" stroke-width="0.6" fill="none" />
<circle cx="695.3" cy="471.8" r="1.9" fill="#5cc23a"/>
<path d="M698.8 472H700M700.9 472H702.1" stroke="#c3c7cc" stroke-width="0.7" fill="none" />
<path d="M710.4 474.6V471.4L711.4 469.2H712.8V474.6ZM716.6 474.6V471.4L715.6 469.2H714.2V474.6Z" fill="#3d4147"/><rect x="712.6" y="470.8" width="1.8" height="1.4" fill="#3d4147"/>
<path d="M721.10 471.55H723.30L722.20 472.85Z" fill="#5a5e64"/>
<path d="M842.7 467.4V476.6" stroke="#dde1e6" stroke-width="0.5" fill="none" />
<path d="M845.00 471.50H847.40L846.20 472.90Z" fill="#4a4e55"/>
<path d="M398.8 135.7V142L400.2 140.7L401.2 143L402.1 142.600L401.100 140.400H403Z" fill="#fff" stroke="#3d4147" stroke-width=".45" stroke-linejoin="round"/>
</svg>
<div id="ctext">
<div class="t" style="left:439.0px;top:86px;font-size:5.9px;line-height:8px;color:#5a5e64;transform:scaleX(1.0021);transform-origin:0 50%;">ORD_DIMS_EXAMPLE (Active) - Creo Parametric</div>
<div class="t" style="left:168.4px;top:83px;font-size:8.6px;line-height:12px;color:#55595f;transform:scaleX(1.0228);transform-origin:0 50%;">creo</div>
<div class="t" style="left:753.9px;top:110px;font-size:9.6px;line-height:13px;color:#4a4e55;">A</div>
<div class="t" style="left:756.9px;top:111px;font-size:15px;line-height:18px;color:#2a7fc9;font-weight:700;font-family:"Liberation Serif",serif;">A</div>
<div class="t" style="left:850.1px;top:98px;font-size:6px;line-height:8px;color:#ffffff;font-weight:700;">?</div>
<div class="t" style="left:162.8px;top:99px;font-size:6px;line-height:8px;color:#ffffff;font-weight:700;transform:scaleX(0.9088);transform-origin:0 50%;">File</div>
<div class="t" style="left:191.4px;top:98px;font-size:6.2px;line-height:9px;color:#ffffff;transform:scaleX(0.9904);transform-origin:0 50%;">Layout</div>
<div class="t" style="left:230.9px;top:98px;font-size:6.2px;line-height:9px;color:#ffffff;transform:scaleX(0.9529);transform-origin:0 50%;">Table</div>
<div class="t" style="left:267.0px;top:99px;font-size:6px;line-height:8px;color:#7a9a5a;transform:scaleX(1.0486);transform-origin:0 50%;">Annotate</div>
<div class="t" style="left:313.2px;top:98px;font-size:6.2px;line-height:9px;color:#ffffff;transform:scaleX(0.9566);transform-origin:0 50%;">Sketch</div>
<div class="t" style="left:352.4px;top:98px;font-size:6.2px;line-height:9px;color:#ffffff;transform:scaleX(1.0101);transform-origin:0 50%;">Legacy Migration</div>
<div class="t" style="left:421.4px;top:98px;font-size:6.2px;line-height:9px;color:#ffffff;transform:scaleX(0.9329);transform-origin:0 50%;">Analysis</div>
<div class="t" style="left:464.0px;top:98px;font-size:6.2px;line-height:9px;color:#ffffff;transform:scaleX(0.9213);transform-origin:0 50%;">Review</div>
<div class="t" style="left:504.3px;top:98px;font-size:6.2px;line-height:9px;color:#ffffff;transform:scaleX(0.941);transform-origin:0 50%;">Tools</div>
<div class="t" style="left:539.0px;top:98px;font-size:6.2px;line-height:9px;color:#ffffff;transform:scaleX(0.9615);transform-origin:0 50%;">View</div>
<div class="t" style="left:572.9px;top:98px;font-size:6.2px;line-height:9px;color:#ffffff;transform:scaleX(0.9789);transform-origin:0 50%;">Framework</div>
<div class="t" style="left:182.5px;top:131px;font-size:5.8px;line-height:8px;color:#666a70;transform:scaleX(1.0109);transform-origin:0 50%;">Draft</div>
<div class="t" style="left:181.8px;top:138px;font-size:5.8px;line-height:8px;color:#666a70;transform:scaleX(0.9116);transform-origin:0 50%;">Group</div>
<div class="t" style="left:202.0px;top:131px;font-size:5.8px;line-height:8px;color:#c3c7cc;transform:scaleX(0.8649);transform-origin:0 50%;">Relate</div>
<div class="t" style="left:202.0px;top:138px;font-size:5.8px;line-height:8px;color:#c3c7cc;transform:scaleX(0.8822);transform-origin:0 50%;">View</div>
<div class="t" style="left:230.0px;top:112px;font-size:5.8px;line-height:8px;color:#c3c7cc;transform:scaleX(0.9281);transform-origin:0 50%;">Relate to View</div>
<div class="t" style="left:230.0px;top:124px;font-size:5.8px;line-height:8px;color:#c3c7cc;transform:scaleX(0.9572);transform-origin:0 50%;">Relate to Object</div>
<div class="t" style="left:230.0px;top:136px;font-size:5.8px;line-height:8px;color:#c3c7cc;transform:scaleX(0.926);transform-origin:0 50%;">Unrelate</div>
<div class="t" style="left:275.8px;top:131px;font-size:5.8px;line-height:8px;color:#666a70;transform:scaleX(0.9371);transform-origin:0 50%;">Show Model</div>
<div class="t" style="left:276.3px;top:138px;font-size:5.8px;line-height:8px;color:#666a70;transform:scaleX(0.9306);transform-origin:0 50%;">Annotations</div>
<div class="t" style="left:315.0px;top:131px;font-size:5.8px;line-height:8px;color:#666a70;transform:scaleX(0.8981);transform-origin:0 50%;">Dimension</div>
<div class="t" style="left:344.0px;top:131px;font-size:5.8px;line-height:8px;color:#666a70;transform:scaleX(0.9346);transform-origin:0 50%;">Geometric</div>
<div class="t" style="left:345.4px;top:138px;font-size:5.8px;line-height:8px;color:#666a70;transform:scaleX(0.9109);transform-origin:0 50%;">Tolerance</div>
<div class="t" style="left:382.3px;top:112px;font-size:5.8px;line-height:8px;color:#666a70;transform:scaleX(0.9525);transform-origin:0 50%;">Ordinate Dimension</div>
<div class="t" style="left:382.3px;top:124px;font-size:5.8px;line-height:8px;color:#666a70;transform:scaleX(0.9224);transform-origin:0 50%;">Note</div>
<div class="t" style="left:382.3px;top:136px;font-size:5.8px;line-height:8px;color:#666a70;transform:scaleX(0.8742);transform-origin:0 50%;">Surface Finish</div>
<div class="t" style="left:450.0px;top:112px;font-size:5.8px;line-height:8px;color:#666a70;transform:scaleX(0.9305);transform-origin:0 50%;">Symbol</div>
<div class="t" style="left:450.0px;top:124px;font-size:5.8px;line-height:8px;color:#666a70;transform:scaleX(0.9344);transform-origin:0 50%;">Datum Feature Symbol</div>
<div class="t" style="left:450.0px;top:136px;font-size:5.8px;line-height:8px;color:#666a70;transform:scaleX(0.9423);transform-origin:0 50%;">Datum Target</div>
<div class="t" style="left:518.9px;top:112px;font-size:5.8px;line-height:8px;color:#666a70;transform:scaleX(0.9408);transform-origin:0 50%;">Draft Datum</div>
<div class="t" style="left:518.9px;top:124px;font-size:5.8px;line-height:8px;color:#666a70;transform:scaleX(0.9154);transform-origin:0 50%;">Symmetry Line Axis</div>
<div class="t" style="left:572.0px;top:131px;font-size:5.8px;line-height:8px;color:#666a70;transform:scaleX(0.9513);transform-origin:0 50%;">Attachment</div>
<div class="t" style="left:613.4px;top:112px;font-size:5.8px;line-height:8px;color:#c3c7cc;transform:scaleX(0.9394);transform-origin:0 50%;">Move to View</div>
<div class="t" style="left:613.4px;top:124px;font-size:5.8px;line-height:8px;color:#c3c7cc;transform:scaleX(0.9135);transform-origin:0 50%;">Move Special</div>
<div class="t" style="left:613.4px;top:136px;font-size:5.8px;line-height:8px;color:#c3c7cc;transform:scaleX(0.9254);transform-origin:0 50%;">Move to Sheet</div>
<div class="t" style="left:665.8px;top:131px;font-size:5.8px;line-height:8px;color:#c3c7cc;transform:scaleX(1.0085);transform-origin:0 50%;">Align</div>
<div class="t" style="left:657.2px;top:138px;font-size:5.8px;line-height:8px;color:#c3c7cc;transform:scaleX(0.8879);transform-origin:0 50%;">Dimensions</div>
<div class="t" style="left:697.6px;top:112px;font-size:5.8px;line-height:8px;color:#666a70;transform:scaleX(0.8548);transform-origin:0 50%;">Jog</div>
<div class="t" style="left:697.6px;top:124px;font-size:5.8px;line-height:8px;color:#666a70;transform:scaleX(0.8841);transform-origin:0 50%;">Break</div>
<div class="t" style="left:697.6px;top:136px;font-size:5.8px;line-height:8px;color:#666a70;transform:scaleX(0.9215);transform-origin:0 50%;">Cleanup Dimensions</div>
<div class="t" style="left:755.0px;top:131px;font-size:5.8px;line-height:8px;color:#666a70;transform:scaleX(1.015);transform-origin:0 50%;">Text</div>
<div class="t" style="left:754.4px;top:138px;font-size:5.8px;line-height:8px;color:#666a70;transform:scaleX(0.9309);transform-origin:0 50%;">Style</div>
<div class="t" style="left:773.5px;top:131px;font-size:5.8px;line-height:8px;color:#666a70;transform:scaleX(0.939);transform-origin:0 50%;">Line</div>
<div class="t" style="left:772.7px;top:138px;font-size:5.8px;line-height:8px;color:#666a70;transform:scaleX(0.9309);transform-origin:0 50%;">Style</div>
<div class="t" style="left:804.0px;top:112px;font-size:5.8px;line-height:8px;color:#666a70;transform:scaleX(0.9244);transform-origin:0 50%;">Arrow Style</div>
<div class="t" style="left:804.0px;top:124px;font-size:5.8px;line-height:8px;color:#c3c7cc;transform:scaleX(0.9037);transform-origin:0 50%;">Repeat Last Format</div>
<div class="t" style="left:804.0px;top:136px;font-size:5.8px;line-height:8px;color:#c3c7cc;transform:scaleX(0.9391);transform-origin:0 50%;">Hyperlink</div>
<div class="t" style="left:155.8px;top:149px;font-size:5.6px;line-height:8px;color:#6a6e74;transform:scaleX(1.0017);transform-origin:0 50%;">Delete</div>
<div class="t" style="left:218.6px;top:149px;font-size:5.6px;line-height:8px;color:#6a6e74;transform:scaleX(0.9069);transform-origin:0 50%;">Group</div>
<div class="t" style="left:403.8px;top:149px;font-size:5.6px;line-height:8px;color:#6a6e74;transform:scaleX(1.0018);transform-origin:0 50%;">Annotations</div>
<div class="t" style="left:652.9px;top:149px;font-size:5.6px;line-height:8px;color:#6a6e74;transform:scaleX(0.8921);transform-origin:0 50%;">Edit</div>
<div class="t" style="left:791.2px;top:149px;font-size:5.6px;line-height:8px;color:#6a6e74;transform:scaleX(0.9086);transform-origin:0 50%;">Format</div>
<div class="t" style="left:167.7px;top:162px;font-size:5.6px;line-height:8px;color:#777b82;transform:scaleX(0.9684);transform-origin:0 50%;">Model Tree</div>
<div class="t" style="left:213.1px;top:162px;font-size:5.6px;line-height:8px;color:#777b82;transform:scaleX(1.0124);transform-origin:0 50%;-webkit-mask-image:linear-gradient(90deg,#000 82%,transparent 100%);">Folder Br</div>
<div class="t" style="left:255.0px;top:162px;font-size:5.6px;line-height:8px;color:#777b82;transform:scaleX(0.9211);transform-origin:0 50%;">Favorites</div>
<div class="t" style="left:167.0px;top:175px;font-size:5.6px;line-height:8px;color:#3a3d42;font-weight:700;transform:scaleX(0.9618);transform-origin:0 50%;">Drawing Tree</div>
<div class="t" style="left:170.0px;top:187px;font-size:4.6px;line-height:7px;color:#7b7f86;transform:scaleX(0.9651);transform-origin:0 50%;">Sheet 1 of ORD_DIMS_EXAMPLE.DRW</div>
<div class="t" style="left:179.0px;top:197px;font-size:4.6px;line-height:7px;color:#7b7f86;transform:scaleX(0.9132);transform-origin:0 50%;">new_view_1</div>
<div class="t" style="left:177.2px;top:206px;font-size:4.6px;line-height:7px;color:#7b7f86;transform:scaleX(1.0261);transform-origin:0 50%;">Annotations</div>
<div class="t" style="left:179.0px;top:216px;font-size:4.6px;line-height:7px;color:#7b7f86;transform:scaleX(0.9132);transform-origin:0 50%;">new_view_2</div>
<div class="t" style="left:177.2px;top:225px;font-size:4.6px;line-height:7px;color:#7b7f86;transform:scaleX(1.0261);transform-origin:0 50%;">Annotations</div>
<div class="t" style="left:167.0px;top:321px;font-size:5.6px;line-height:8px;color:#3a3d42;font-weight:700;transform:scaleX(0.968);transform-origin:0 50%;">Model Tree</div>
<div class="t" style="left:167.9px;top:332px;font-size:4.6px;line-height:7px;color:#7b7f86;transform:scaleX(0.9102);transform-origin:0 50%;">ORD_DIMS_EXAMPLE.PRT</div>
<div class="t" style="left:177.2px;top:341px;font-size:4.6px;line-height:7px;color:#7b7f86;transform:scaleX(0.9839);transform-origin:0 50%;">Bodies (1)</div>
<div class="t" style="left:177.2px;top:350px;font-size:4.6px;line-height:7px;color:#9a9ea5;transform:scaleX(0.8883);transform-origin:0 50%;">RIGHT</div>
<div class="t" style="left:177.2px;top:359px;font-size:4.6px;line-height:7px;color:#9a9ea5;transform:scaleX(0.8213);transform-origin:0 50%;">TOP</div>
<div class="t" style="left:177.2px;top:368px;font-size:4.6px;line-height:7px;color:#7b7f86;transform:scaleX(0.9287);transform-origin:0 50%;">FRONT</div>
<div class="t" style="left:177.2px;top:376px;font-size:4.6px;line-height:7px;color:#7b7f86;transform:scaleX(0.8296);transform-origin:0 50%;">PRT_CSYS_DEF</div>
<div class="t" style="left:177.2px;top:385px;font-size:4.6px;line-height:7px;color:#7b7f86;transform:scaleX(0.9608);transform-origin:0 50%;">Extrude 1</div>
<div class="t" style="left:177.2px;top:394px;font-size:4.6px;line-height:7px;color:#7b7f86;transform:scaleX(0.9613);transform-origin:0 50%;">Pattern 2 of LOCAL_GROUP</div>
<div class="t" style="left:177.2px;top:403px;font-size:4.6px;line-height:7px;color:#5a5e64;transform:scaleX(0.9963);transform-origin:0 50%;">Extrude 2</div>
<div class="t" style="left:177.2px;top:411px;font-size:4.6px;line-height:7px;color:#7b7f86;transform:scaleX(0.9669);transform-origin:0 50%;">Round 1</div>
<div class="t" style="left:177.2px;top:420px;font-size:4.6px;line-height:7px;color:#7b7f86;transform:scaleX(1.0344);transform-origin:0 50%;">Annotation 1</div>
<div class="t" style="left:177.2px;top:429px;font-size:4.6px;line-height:7px;color:#7b7f86;transform:scaleX(1.0344);transform-origin:0 50%;">Annotation 2</div>
<div class="t" style="left:417.6px;top:207px;font-size:8.2px;line-height:11px;color:#5b3191;font-weight:700;transform:scaleX(0.78);transform-origin:0 50%;">D</div>
<div class="t" style="left:416.3px;top:294px;font-size:8.2px;line-height:11px;color:#5b3191;font-weight:700;transform:scaleX(0.82);transform-origin:0 50%;">E</div>
<div class="t" style="left:417.0px;top:380px;font-size:8.2px;line-height:11px;color:#5b3191;font-weight:700;transform:scaleX(0.86);transform-origin:0 50%;">F</div>
<div class="t" style="left:641.6px;top:352px;font-size:8.8px;line-height:12px;color:#a3a9b8;letter-spacing:1.052px;transform:scaleX(0.68);transform-origin:0 50%;font-family:"Liberation Mono",monospace;">SCALE</div>
<div class="t" style="left:669.7px;top:352px;font-size:8.8px;line-height:12px;color:#a3a9b8;letter-spacing:2.597px;transform:scaleX(0.68);transform-origin:0 50%;font-family:"Liberation Mono",monospace;">0.010</div>
<div class="t" style="left:287.5px;top:443px;font-size:5.6px;line-height:9px;color:#c0c5cd;letter-spacing:0.274px;transform:scaleX(0.7);transform-origin:0 50%;font-family:"Liberation Mono",monospace;">SCALE</div>
<div class="t" style="left:305.3px;top:443px;font-size:5.6px;line-height:9px;color:#c0c5cd;letter-spacing:-0.138px;transform:scaleX(0.7);transform-origin:0 50%;font-family:"Liberation Mono",monospace;">: 0.004</div>
<div class="t" style="left:323.0px;top:443px;font-size:5.6px;line-height:9px;color:#c0c5cd;letter-spacing:0.451px;transform:scaleX(0.7);transform-origin:0 50%;font-family:"Liberation Mono",monospace;">TYPE</div>
<div class="t" style="left:338.2px;top:443px;font-size:5.6px;line-height:9px;color:#c0c5cd;letter-spacing:-0.086px;transform:scaleX(0.7);transform-origin:0 50%;font-family:"Liberation Mono",monospace;">: PART</div>
<div class="t" style="left:355.1px;top:443px;font-size:5.6px;line-height:9px;color:#c0c5cd;letter-spacing:0.600px;transform:scaleX(0.7);transform-origin:0 50%;font-family:"Liberation Mono",monospace;">NAME</div>
<div class="t" style="left:372.2px;top:443px;font-size:5.6px;line-height:9px;color:#c0c5cd;letter-spacing:0.213px;transform:scaleX(0.7);transform-origin:0 50%;font-family:"Liberation Mono",monospace;">: ORD_DIMS_EXAMPLE</div>
<div class="t" style="left:424.1px;top:443px;font-size:5.6px;line-height:9px;color:#c0c5cd;letter-spacing:0.197px;transform:scaleX(0.7);transform-origin:0 50%;font-family:"Liberation Mono",monospace;">SIZE : C</div>
<div class="t" style="left:458.4px;top:342px;font-size:8.4px;line-height:12px;color:#a6abb8;transform:scaleX(0.68);transform-origin:0 50%;font-family:"Liberation Mono",monospace;">0</div>
<div class="t" style="left:331.2px;top:454px;font-size:5.8px;line-height:8px;color:#33363b;font-weight:700;transform:scaleX(0.897);transform-origin:0 50%;">Sheet 1</div>
<div class="t" style="left:199.2px;top:468px;font-size:4.6px;line-height:7px;color:#6a6e74;transform:scaleX(1.0482);transform-origin:0 50%;">Click twice to draw a box for the zoom area.</div>
<div class="t" style="left:773.3px;top:469px;font-size:4.6px;line-height:7px;color:#7b7f86;transform:scaleX(1.1319);transform-origin:0 50%;">General</div>
</div>
</div>

<!-- TASKBAR -->
<div id="taskbar"></div>
<div class="abs" style="left:405.1px;top:545px;width:36px;height:30px;background:#3c3c3c"></div>
<div class="run" style="left:41px;width:30.1px"></div>
<div class="run" style="left:77.7px;width:30.1px"></div>
<div class="run" style="left:187.8px;width:30.1px"></div>
<div class="run" style="left:224.9px;width:29.3px"></div>
<div class="run" style="left:405.1px;width:36.0px"></div>
<div class="run" style="left:444.7px;width:30.1px"></div>
<div class="run" style="left:481.4px;width:30.0px"></div>
<div class="run" style="left:518px;width:30.1px"></div>
<svg class="abs" style="left:0;top:545px;width:1023px;height:30px" viewBox="0 545 1023 30">
<path d="M11.7 555.3L17 554.5V559.3H11.7ZM17.8 554.4L24.5 553.4V559.3H17.8ZM11.7 560.1H17V564.9L11.7 564.1ZM17.8 560.1H24.5V566L17.8 565Z" fill="#fff"/>
<path d="M48.1 554.2Q48.1 553.3 49 553.3H53.4L54.6 554.6H63.2Q64.2 554.6 64.2 555.6V566.3H48.1Z" fill="#f0b93a"/>
<rect x="48.1" y="555.6" width="16.1" height="10.7" rx=".6" fill="#fad56a"/>
<path d="M50.8 566.3V560.6H61.6V566.3H58.6V563.2H53.8V566.3Z" fill="#3b92e0"/>
<rect x="50.8" y="559.4" width="10.8" height="1.6" fill="#63b4f4"/>
<rect x="84" y="551" width="17.9" height="17.5" rx="2.6" fill="#25608f"/>
<path d="M87.2 553.6Q86.6 557.8 89.4 561.4Q88.4 557 90.4 555.4Q93.6 557.6 95.4 562.6Q96.6 565.6 99 566.2M87.200 553.600Q89 553.200 90.400 555.400M96.200 553.200L98.800 556.200" stroke="#e4ecf4" stroke-width=".8" fill="none"/>
<rect x="129.600" y="551.600" width="6.400" height="5" fill="#1f2fd0" stroke="#c9ccd1" stroke-width=".8"/><path d="M128.600 558.200H137.400L136.600 556.800H129.400Z" fill="#d9dce1"/>
<rect x="122.800" y="559.800" width="6.400" height="5" fill="#1f2fd0" stroke="#c9ccd1" stroke-width=".8"/><path d="M121.400 567.600H131L130 565.600H122.400Z" fill="#d9dce1"/>
<path d="M133.400 553.600L127.800 559.400L130.200 559.800L125.600 565L133 558.800L130.600 558.400Z" fill="#f5e432"/>
<rect x="157" y="551" width="18.500" height="17.800" fill="#0e74d9"/><circle cx="166.300" cy="559.800" r="7.300" fill="#fff"/>
<path d="M160.600 559.800L164.200 557.200V558.800H168.400V557.200L172 559.800L168.400 562.400V560.800H164.200V562.400Z" fill="#0e74d9"/>
<rect x="194.100" y="551.200" width="14" height="17.300" fill="#f1f3f6"/><rect x="195.200" y="552.400" width="11.800" height="11.600" fill="#3a7fc6"/>
<path d="M195.200 558L199 554.400L202 557.600L207 553V564H195.200Z" fill="#9cc6ea" opacity=".7"/><rect x="195.200" y="564" width="11.800" height="3" fill="#2b2f36"/>
<path d="M210 555L198.600 566" stroke="#b5432f" stroke-width="1.300"/><path d="M199.600 565L196.800 567.200" stroke="#e9ecef" stroke-width="1"/>
<ellipse cx="240.400" cy="558" rx="8.200" ry="5.600" fill="#f3f4f6" stroke="#d9482f" stroke-width="1" transform="rotate(-18 240.400 558)"/>
<path d="M238 554L241.800 561.600M244 553.600L239.600 561.600" stroke="#9a9ea5" stroke-width=".7" fill="none"/>
<circle cx="243.600" cy="565.200" r="1.900" fill="none" stroke="#2f8de0" stroke-width="1.200"/><circle cx="247" cy="562.800" r="1.900" fill="none" stroke="#2f8de0" stroke-width="1.200"/>
<path d="M232.600 561.600Q236 565 240.600 563.600" stroke="#8a8f96" stroke-width="1.200" fill="none"/>
<rect x="269.600" y="551" width="13.200" height="17.800" rx=".8" fill="#f4f4f4"/><rect x="271.200" y="552.600" width="10" height="3" fill="#2a2a2a"/>
<rect x="271.2" y="557.6" width="2.400" height="2.200" fill="#3a3a3a"/>
<rect x="274.9" y="557.6" width="2.400" height="2.200" fill="#3a3a3a"/>
<rect x="278.6" y="557.6" width="2.400" height="2.200" fill="#3a3a3a"/>
<rect x="271.2" y="561.1" width="2.400" height="2.200" fill="#3a3a3a"/>
<rect x="274.9" y="561.1" width="2.400" height="2.200" fill="#3a3a3a"/>
<rect x="278.6" y="561.1" width="2.400" height="2.200" fill="#3a3a3a"/>
<rect x="271.2" y="564.6" width="2.400" height="2.200" fill="#3a3a3a"/>
<rect x="274.9" y="564.6" width="2.400" height="2.200" fill="#3a3a3a"/>
<rect x="278.6" y="564.6" width="2.400" height="2.200" fill="#3a3a3a"/>
<rect x="311" y="553.400" width="10.200" height="12.800" rx=".6" fill="#f1f5f2"/>
<path d="M313 555H320M313 557.600H320M313 560.200H320M313 562.800H320M316.600 553.400V566.200" stroke="#2e8b57" stroke-width=".8"/>
<path d="M303.900 553.600L314.600 552V567.700L303.900 566Z" fill="#1e7145"/>
<text x="309.200" y="563.600" text-anchor="middle" font-family="Liberation Sans, sans-serif" font-weight="700" font-size="9.600" fill="#fff">X</text>
<circle cx="349.800" cy="559.800" r="8.500" fill="#4a2f7a"/><circle cx="348.400" cy="558.200" r="6.200" fill="#7a5aa8" opacity=".6"/>
<path d="M342.200 557.400H357.400M341.600 559.800H358M342.200 562.200H357.400" stroke="#e9e3f2" stroke-width=".9" opacity=".85"/>
<path d="M378 551H390.600L394.100 554.400V568.800H378Z" fill="#f4f6f4"/><rect x="379" y="561.600" width="14" height="6.400" fill="#6cc04a"/><rect x="379" y="558" width="14" height="3.600" fill="#b9e39f"/>
<path d="M381 554.600H386.600V559.600H381Z" fill="#8b8f96"/><path d="M393.800 551.600L386.600 564.400" stroke="#e8a02c" stroke-width="1.800"/><path d="M386.900 563.800L386 566.200" stroke="#3a3a3a" stroke-width="1"/>
<circle cx="423" cy="560" r="8.300" fill="#db4437"/>
<path d="M423 560L415.810 564.150A8.300 8.300 0 0 1 415.810 555.850Z" fill="#db4437"/>
<path d="M423 560L415.810 555.850A8.300 8.300 0 0 0 427.150 567.190Z" fill="#0f9d58"/>
<path d="M423 560H431.300A8.300 8.300 0 0 1 427.150 567.190Z" fill="#ffcd40"/>
<path d="M423 560L427.150 567.190A8.300 8.300 0 0 0 430.950 557.600H423Z" fill="#ffcd40"/>
<path d="M415.810 555.850A8.300 8.300 0 0 1 430.950 557.600H423Z" fill="#db4437"/>
<circle cx="423" cy="560" r="3.900" fill="#f1f1f1"/><circle cx="423" cy="560" r="3.100" fill="#4285f4"/>
<rect x="450.900" y="551" width="18" height="17.800" fill="#46287f"/>
<circle cx="459.900" cy="559.900" r="6.400" fill="none" stroke="#b9bcc4" stroke-width="2.600" stroke-dasharray="2 1.350"/><circle cx="459.900" cy="559.900" r="5" fill="#7d7f8a"/>
<rect x="452.400" y="556.600" width="15" height="2.600" fill="#e8891c"/><rect x="455.400" y="560.600" width="9" height="2.800" fill="#e8891c"/>
<rect x="487.500" y="552.300" width="16.900" height="14.400" fill="#050505" stroke="#8b8f96" stroke-width=".7"/><rect x="487.800" y="552.600" width="16.300" height="2.200" fill="#c9ccd1"/>
<path d="M489.600 557.600H493.600M494.600 559.200H497.600" stroke="#c9ccd1" stroke-width=".8"/>
<rect x="532" y="553" width="9.500" height="13.600" rx=".6" fill="#f6e9e4"/><circle cx="537.400" cy="557.400" r="2.400" fill="none" stroke="#d04423" stroke-width=".9"/><path d="M534.600 561.600H540M534.600 563.800H540" stroke="#d04423" stroke-width=".9"/>
<path d="M524.600 552.900L535 551.200V568.500L524.600 566.800Z" fill="#d04423"/>
<text x="529.900" y="563.800" text-anchor="middle" font-family="Liberation Sans, sans-serif" font-weight="700" font-size="10.400" fill="#fff">P</text>
<path d="M940.400 562.400L944.400 558.400L948.400 562.400" stroke="#f1f1f1" stroke-width="1" fill="none"/>
<rect x="958.600" y="557.600" width="9" height="5.600" fill="none" stroke="#f1f1f1" stroke-width=".9"/><rect x="967.800" y="559.200" width="1" height="2.400" fill="#f1f1f1"/><rect x="959.600" y="558.600" width="7" height="3.600" fill="#d9d9d9"/>
<path d="M956.800 555.600V558.600M955.600 556.600H958M956.400 558.600H959" stroke="#f1f1f1" stroke-width=".8"/>
<path d="M1019.300 545V575" stroke="#6a6a6a" stroke-width=".7"/>
</svg>
<div class="t" style="left:979.5px;top:548.2px;font-size:9px;line-height:11px;color:#fff;letter-spacing:-.3px" id="clk1">4:57 PM</div>
<div class="t" style="left:978.2px;top:561.8px;font-size:9px;line-height:11px;color:#fff;letter-spacing:-.07px" id="clk2">5/5/2020</div>
</body>
</html>
